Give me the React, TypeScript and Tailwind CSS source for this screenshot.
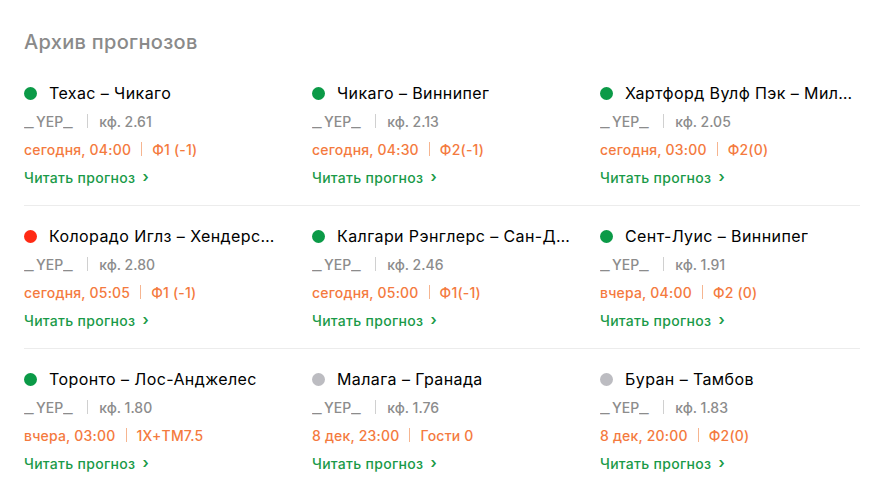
import React from 'react';

type Forecast = {
  match: string;
  status: 'win' | 'lose' | 'pending';
  author: string;
  odds: string;
  time: string;
  bet: string;
};

const rows: Forecast[][] = [
  [
    { match: 'Техас – Чикаго', status: 'win', author: 'YEP', odds: '2.61', time: 'сегодня, 04:00', bet: 'Ф1 (-1)' },
    { match: 'Чикаго – Виннипег', status: 'win', author: 'YEP', odds: '2.13', time: 'сегодня, 04:30', bet: 'Ф2(-1)' },
    { match: 'Хартфорд Вулф Пэк – Милуоки Эдмиралс', status: 'win', author: 'YEP', odds: '2.05', time: 'сегодня, 03:00', bet: 'Ф2(0)' },
  ],
  [
    { match: 'Колорадо Иглз – Хендерсон Силвер Найтс', status: 'lose', author: 'YEP', odds: '2.80', time: 'сегодня, 05:05', bet: 'Ф1 (-1)' },
    { match: 'Калгари Рэнглерс – Сан-Диего Галлс', status: 'win', author: 'YEP', odds: '2.46', time: 'сегодня, 05:00', bet: 'Ф1(-1)' },
    { match: 'Сент-Луис – Виннипег', status: 'win', author: 'YEP', odds: '1.91', time: 'вчера, 04:00', bet: 'Ф2 (0)' },
  ],
  [
    { match: 'Торонто – Лос-Анджелес', status: 'win', author: 'YEP', odds: '1.80', time: 'вчера, 03:00', bet: '1X+ТМ7.5' },
    { match: 'Малага – Гранада', status: 'pending', author: 'YEP', odds: '1.76', time: '8 дек, 23:00', bet: 'Гости 0' },
    { match: 'Буран – Тамбов', status: 'pending', author: 'YEP', odds: '1.83', time: '8 дек, 20:00', bet: 'Ф2(0)' },
  ],
];

const dotColor = {
  win: 'bg-[#0b9a47]',
  lose: 'bg-[#ff2a14]',
  pending: 'bg-[#bcbcc1]',
};

// wide underscore, as in the site's font
const Under = () => (
  <span className="inline-block w-[12px]">
    <span className="inline-block scale-x-[1.5] origin-left">_</span>
  </span>
);

const Card: React.FC<{ f: Forecast }> = ({ f }) => (
  <div className="min-w-0">
    <div className="flex items-center gap-3 h-7">
      <span className={`flex-shrink-0 w-[13px] h-[13px] rounded-full ${dotColor[f.status]}`} />
      <span className="text-[16px] tracking-[0.4px] text-black truncate">{f.match}</span>
    </div>
    <div className="flex items-center h-7 text-[14px] font-medium text-[#8c8c8c]">
      <span className="flex">
        <Under />
        {f.author}
        <Under />
      </span>
      <span className="ml-[12px] mr-[11px] w-px h-[14px] bg-[#d0d0d0]" />
      <span>кф. {f.odds}</span>
    </div>
    <div className="flex items-center h-7 text-[14px] font-medium tracking-[0.2px] text-[#f47a3e]">
      <span>{f.time}</span>
      <span className="mx-[10px] w-px h-[14px] bg-[#f6b590]" />
      <span>{f.bet}</span>
    </div>
    <a href="#" className="flex items-center h-7 text-[14px] font-medium tracking-[0.3px] text-[#1a9a48]">
      Читать прогноз <span className="ml-[7px] text-[15px] font-semibold">›</span>
    </a>
  </div>
);

export default function App() {
  return (
    <div className="w-[889px] h-[489px] bg-white px-6 pt-7 overflow-hidden" style={{ fontFamily: 'Inter, "Noto Sans", sans-serif' }}>
      <div className="w-[836px]">
        <h2 className="h-7 flex items-center text-[20px] tracking-[0.3px] text-[#8a8a8a] font-medium">Архив прогнозов</h2>
        <div className="pt-[7px]">
          {rows.map((row, i) => (
            <div key={i} className={`grid grid-cols-3 gap-x-7 pt-4 pb-[14px] ${i < rows.length - 1 ? 'border-b border-[#ececec]' : ''}`}>
              {row.map((f, j) => (
                <Card key={j} f={f} />
              ))}
            </div>
          ))}
        </div>
      </div>
    </div>
  );
}
